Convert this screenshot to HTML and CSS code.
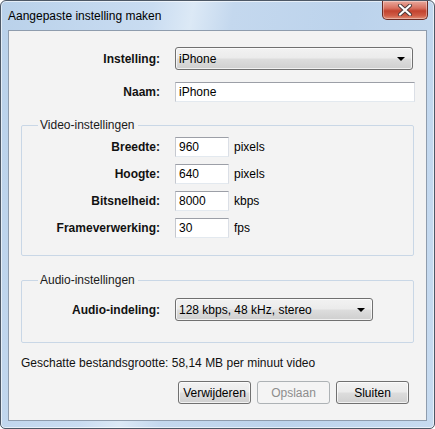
FILE: index.html
```html
<!DOCTYPE html>
<html>
<head>
<meta charset="utf-8">
<link rel="stylesheet" href="styles.css">
</head>
<body>
<div class="window">
  <div class="titlebar">
    <span class="title">Aangepaste instelling maken</span>
    <span class="close">
      <svg width="16" height="12" viewBox="0 0 16 12"><path d="M3 1.5 L13 10.5 M13 1.5 L3 10.5" stroke="#4a3a3a" stroke-width="4" stroke-linecap="round"/><path d="M3 1.5 L13 10.5 M13 1.5 L3 10.5" stroke="#ffffff" stroke-width="2.2" stroke-linecap="round"/></svg>
    </span>
  </div>
  <div class="client">
    <div class="row top1">
      <label class="lbl">Instelling:</label>
      <div class="combo wide"><span>iPhone</span><i class="arrow"></i></div>
    </div>
    <div class="row top2">
      <label class="lbl">Naam:</label>
      <div class="input name">iPhone</div>
    </div>
    <fieldset class="group video">
      <legend>Video-instellingen</legend>
      <div class="row vrow">
        <label class="lbl g">Breedte:</label>
        <div class="input small">960</div><span class="unit">pixels</span>
      </div>
      <div class="row vrow">
        <label class="lbl g">Hoogte:</label>
        <div class="input small">640</div><span class="unit">pixels</span>
      </div>
      <div class="row vrow">
        <label class="lbl g">Bitsnelheid:</label>
        <div class="input small">8000</div><span class="unit">kbps</span>
      </div>
      <div class="row vrow">
        <label class="lbl g">Frameverwerking:</label>
        <div class="input small">30</div><span class="unit">fps</span>
      </div>
    </fieldset>
    <fieldset class="group audio">
      <legend>Audio-instellingen</legend>
      <div class="row">
        <label class="lbl g">Audio-indeling:</label>
        <div class="combo mid"><span>128 kbps, 48 kHz, stereo</span><i class="arrow"></i></div>
      </div>
    </fieldset>
    <div class="estimate">Geschatte bestandsgrootte: 58,14 MB per minuut video</div>
    <div class="buttons">
      <button class="btn">Verwijderen</button>
      <button class="btn disabled">Opslaan</button>
      <button class="btn">Sluiten</button>
    </div>
  </div>
</div>
</body>
</html>
```

FILE: styles.css
```css
html, body {
  margin: 0;
  padding: 0;
  background: #ffffff;
}
body {
  font-family: "Liberation Sans", Arial, sans-serif;
  font-size: 12px;
  color: #000;
}
.window {
  width: 433px;
  height: 427px;
  border: 1px solid #4d5866;
  border-radius: 6px 6px 5px 5px;
  background: linear-gradient(100deg, #b9d1ea 0%, #c9dcf1 30%, #dce9f6 38%, #c4d8ee 46%, #bcd3ec 70%, #c7dbf0 100%);
  display: flex;
  flex-direction: column;
  box-shadow: inset 0 0 0 1px rgba(255,255,255,0.6);
}
.titlebar {
  height: 29px;
  display: flex;
  justify-content: space-between;
  align-items: flex-start;
}
.title {
  margin: 8px 0 0 7px;
  line-height: 14px;
  color: #000;
}
.close {
  width: 44px;
  height: 18px;
  margin-right: 6px;
  border: 1px solid #6b2b24;
  border-top: none;
  border-radius: 0 0 5px 5px;
  background: linear-gradient(#e9a99c 0%, #d8705f 40%, #c2432f 55%, #cf5b45 80%, #e08e76 100%);
  display: flex;
  align-items: center;
  justify-content: center;
  box-shadow: inset 0 0 0 1px rgba(255,255,255,0.35);
}
.client {
  margin: 0 0 0 7px;
  width: 417px;
  height: 389px;
  border: 1px solid #8e9cad;
  background: #f3f3f3;
  display: flex;
  flex-direction: column;
}
.row {
  display: flex;
  align-items: center;
}
.lbl {
  font-weight: bold;
  text-align: right;
  width: 151px;
  margin-right: 15px;
  color: #111;
}
.lbl.g {
  width: 138px;
}
.top1 {
  margin-top: 16px;
}
.top2 {
  margin-top: 12px;
}
.combo {
  height: 21px;
  border: 1px solid #707070;
  border-radius: 3px;
  background: linear-gradient(#f2f2f2 0%, #ebebeb 48%, #dddddd 52%, #cfcfcf 100%);
  box-shadow: inset 0 0 0 1px rgba(255,255,255,0.7);
  display: flex;
  align-items: center;
  justify-content: space-between;
  padding: 0 7px 0 3px;
  box-sizing: content-box;
}
.combo span {
  line-height: 14px;
}
.combo.wide {
  width: 226px;
}
.combo.mid {
  width: 186px;
}
.arrow {
  width: 0;
  height: 0;
  border-left: 4px solid transparent;
  border-right: 4px solid transparent;
  border-top: 4px solid #000;
  margin-top: 1px;
}
.input {
  height: 18px;
  border: 1px solid #abadb3;
  border-top-color: #9c9fa7;
  border-left-color: #c5c8cf;
  border-right-color: #dbdfe6;
  border-bottom-color: #e3e9ef;
  background: #fff;
  padding-left: 3px;
  line-height: 18px;
  box-sizing: content-box;
}
.input.name {
  width: 235px;
}
.input.small {
  width: 49px;
}
.unit {
  margin-left: 5px;
}
.group {
  margin: 0 0 0 12px;
  padding: 0;
  width: 393px;
  border: 1px solid #c9d7e6;
  border-radius: 2px;
  min-width: 0;
  box-sizing: border-box;
}
.group legend {
  margin-left: 16px;
  padding: 0 3px 0 2px;
  line-height: 15px;
  font-size: 12px;
  color: #1a1a1a;
}
.video {
  margin-top: 16px;
  height: 138px;
  padding-top: 4px;
}
.vrow {
  margin-top: 7px;
}
.vrow:first-of-type {
  margin-top: 0;
}
.audio {
  margin-top: 17px;
  height: 70px;
  padding-top: 10px;
}
.estimate {
  margin: 13px 0 0 12px;
  line-height: 14px;
  color: #111;
}
.buttons {
  display: flex;
  justify-content: flex-end;
  gap: 6px;
  margin: 11px 17px 0 0;
}
.btn {
  width: 73px;
  height: 23px;
  border: 1px solid #707070;
  border-radius: 3px;
  background: linear-gradient(#f2f2f2 0%, #ebebeb 48%, #dddddd 52%, #cfcfcf 100%);
  box-shadow: inset 0 0 0 1px rgba(255,255,255,0.7);
  font-family: "Liberation Sans", Arial, sans-serif;
  font-size: 12px;
  color: #000;
  padding: 0;
}
.btn.disabled {
  border-color: #adb2b5;
  background: #f4f4f4;
  color: #8d8d8d;
  box-shadow: none;
}
```
